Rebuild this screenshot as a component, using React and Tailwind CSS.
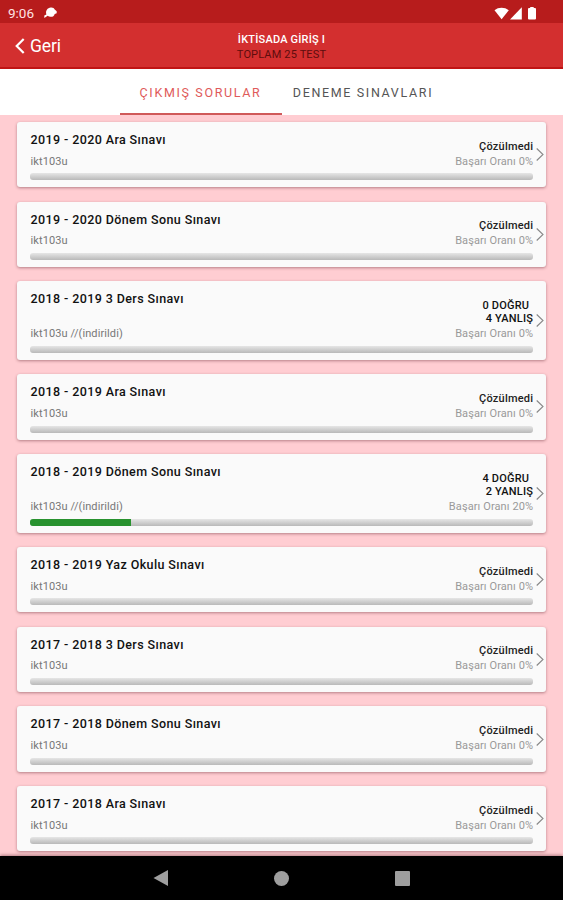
const FONT = "font-['Roboto','Noto_Sans',sans-serif]";

const exams = [
  { title: '2019 - 2020 Ara Sınavı', rate: 0 },
  { title: '2019 - 2020 Dönem Sonu Sınavı', rate: 0 },
  { title: '2018 - 2019 3 Ders Sınavı', rate: 0, right: 0, wrong: 4 },
  { title: '2018 - 2019 Ara Sınavı', rate: 0 },
  { title: '2018 - 2019 Dönem Sonu Sınavı', rate: 20, right: 4, wrong: 2 },
  { title: '2018 - 2019 Yaz Okulu Sınavı', rate: 0 },
  { title: '2017 - 2018 3 Ders Sınavı', rate: 0 },
  { title: '2017 - 2018 Dönem Sonu Sınavı', rate: 0 },
  { title: '2017 - 2018 Ara Sınavı', rate: 0 },
];

function StatusBar() {
  return (
    <div className="flex h-[23px] shrink-0 items-center bg-[#b71c1c] pl-2 pr-[26px] pt-[2px] text-white">
      <span className="text-[13.5px] leading-4 text-[#ffe3e3]">9:06</span>
      <svg className="ml-[10px] h-3 w-[13px]" viewBox="0 0 13 12" fill="currentColor">
        <path d="M6.800 0.500C8.800 0.300 10.200 1.200 10.700 2.600L12.700 4.300V6.200L10.700 6.900C10.200 8.900 8.500 10 6.600 9.800C5.400 9.800 4.400 9.400 3.700 8.700L0.300 10.900V8.500L2.400 7.400C1.200 3.800 3.600 0.800 6.800 0.500Z" />
      </svg>
      <svg className="ml-auto h-[14px] w-[43px]" viewBox="0 0 43 14" fill="currentColor">
        <path d="M0.500 4.300C4.500 1 10.500 1 14.800 4.300L7.600 13.300Z" />
        <path d="M27.800 1.300V13.500H16Z" />
        <path d="M36.200 1H39.700V2H41Q42 2 42 3V12.500Q42 13.500 41 13.500H35Q34 13.500 34 12.500V3Q34 2 35 2H36.200Z" />
      </svg>
    </div>
  );
}

function Header() {
  return (
    <header className="grid h-[46px] shrink-0 grid-cols-[1fr_auto_1fr] items-center border-b-2 border-[#c01414] bg-[#d32f2f]">
      <button className="flex items-center pl-[15px] pt-0.5 text-white">
        <svg className="h-4 w-[10px]" viewBox="0 0 10 16" fill="none" stroke="currentColor" strokeWidth="2.2">
          <path d="M8.700 1L1.700 8L8.700 15" />
        </svg>
        <span className="ml-[5px] text-[17.5px] leading-5 tracking-[-0.1px]">Geri</span>
      </button>
      <div className="pt-1 text-center text-[11px] leading-[15.500px]">
        <div className="font-medium tracking-[0.2px] text-white">İKTİSADA GİRİŞ I</div>
        <div className="tracking-[0.15px] text-[#5e0d0d]">TOPLAM 25 TEST</div>
      </div>
    </header>
  );
}

function Tabs() {
  return (
    <nav className="flex h-[46px] shrink-0 justify-center bg-white text-[12.500px] tracking-[1.650px]">
      <div className="flex w-[162px] items-center justify-center whitespace-nowrap border-b-2 border-[#d05a5a] pt-1 text-[#e05a5a]">ÇIKMIŞ SORULAR</div>
      <div className="flex w-[162px] items-center justify-center whitespace-nowrap border-b-2 border-transparent pl-px pt-1 text-[#555]">DENEME SINAVLARI</div>
    </nav>
  );
}

function ExamCard({ exam }) {
  const solved = exam.right !== undefined;
  return (
    <article
      className={`flex shrink-0 rounded-[3px] bg-[#fafafa] pl-[13.300px] shadow-[0_1px_3px_rgba(90,30,40,0.45)] ${solved ? 'h-[78.500px]' : 'h-[65.200px]'}`}
    >
      <div className="flex w-[502.700px] flex-col pb-[7px] pt-2.5">
        <div className="flex flex-1 justify-between">
          <div className="flex flex-col justify-between">
            <h2 className="text-[12.500px] font-medium leading-4 tracking-[0.400px] text-[#111]">{exam.title}</h2>
            <p className="text-[11px] leading-[14px] tracking-[0.1px] text-[#777]">ikt103u{solved && ' //(indirildi)'}</p>
          </div>
          <div className="flex flex-col justify-end text-right text-[11px]">
            {solved ? (
              <div className="mb-px font-medium leading-[13px] tracking-[0.200px] text-[#111]">
                <div className="pr-1">{exam.right} DOĞRU</div>
                <div>{exam.wrong} YANLIŞ</div>
              </div>
            ) : (
              <div className="font-medium leading-[15px] tracking-[0.200px] text-[#222]">Çözülmedi</div>
            )}
            <div className="mt-px leading-[14px] tracking-[0.1px] text-[#999]">Başarı Oranı {exam.rate}%</div>
          </div>
        </div>
        <div className="mt-[4.600px] h-[7px] shrink-0 overflow-hidden rounded-[3px] bg-linear-to-b from-[#e6e6e6] to-[#b9b9b9]">
          <div className="h-full bg-[#28922f]" style={{ width: `${exam.rate}%` }} />
        </div>
      </div>
      <svg className="ml-[3px] h-[13px] w-2 self-center" viewBox="0 0 8 13" fill="none" stroke="#888" strokeWidth="1.100">
        <path d="M0.700 0.500L7 6.500L0.700 12.500" />
      </svg>
    </article>
  );
}

function NavBar() {
  return (
    <footer className="z-10 flex h-[44px] shrink-0 items-center justify-between bg-black px-[153px] text-[#9e9e9e] shadow-[0_-1px_3px_rgba(60,0,10,0.4)]">
      <svg className="h-4 w-[15px]" viewBox="0 0 15 16" fill="currentColor"><path d="M15 0V16L0.500 8Z" /></svg>
      <div className="size-[15px] rounded-full bg-[#9e9e9e]" />
      <div className="size-[15px] rounded-[1px] bg-[#9e9e9e]" />
    </footer>
  );
}

export default function App() {
  return (
    <div className={`flex h-[900px] w-[563px] flex-col overflow-hidden ${FONT}`}>
      <StatusBar />
      <Header />
      <Tabs />
      <main className="flex min-h-0 flex-1 flex-col gap-[14.500px] overflow-hidden bg-[#ffcdd2] pl-[17.200px] pr-[16.800px] pt-[7px]">
        {exams.map((exam) => (
          <ExamCard key={exam.title} exam={exam} />
        ))}
      </main>
      <NavBar />
    </div>
  );
}
